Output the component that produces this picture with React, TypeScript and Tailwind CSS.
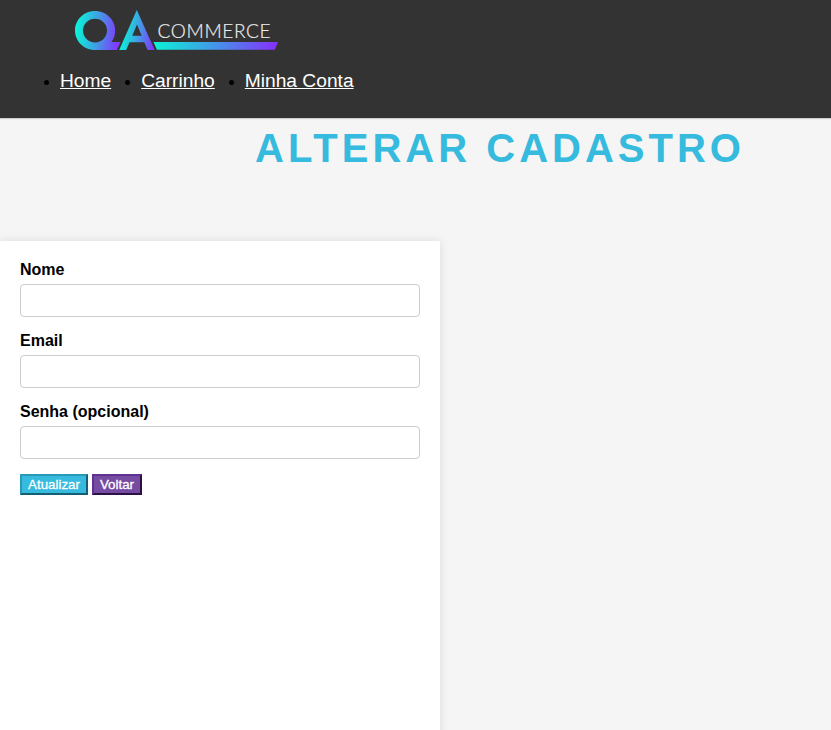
import React from "react";

function Logo() {
  return (
    <svg width="210" height="46" viewBox="72 7 210 46" className="block" aria-label="QA Commerce">
      <defs>
        <linearGradient id="q" gradientUnits="userSpaceOnUse" x1="76" y1="34" x2="117" y2="38">
          <stop offset="0" stopColor="#0cf2d8" />
          <stop offset="0.5" stopColor="#3f9fe4" />
          <stop offset="1" stopColor="#7f3bfb" />
        </linearGradient>
        <linearGradient id="a" gradientUnits="userSpaceOnUse" x1="121" y1="40" x2="153" y2="44">
          <stop offset="0" stopColor="#0cf2d8" />
          <stop offset="0.5" stopColor="#3f9fe4" />
          <stop offset="1" stopColor="#7f3bfb" />
        </linearGradient>
        <linearGradient id="bar" gradientUnits="userSpaceOnUse" x1="154" y1="0" x2="278" y2="0">
          <stop offset="0" stopColor="#0cf2d8" />
          <stop offset="0.5" stopColor="#4594e9" />
          <stop offset="1" stopColor="#862efb" />
        </linearGradient>
      </defs>
      <path
        fill="url(#q)"
        fillRule="evenodd"
        d="M95 11C84 11 75 19.700 75 30.500S84 50 95 50H117L120.500 42H111.500C113.800 38.800 115.200 34.800 115.200 30.500C115.200 19.700 106 11 95 11ZM95 18.800A12 11.800 0 1 1 95 42.400A12 11.800 0 1 1 95 18.800Z"
      />
      <path
        fill="url(#a)"
        fillRule="evenodd"
        d="M136.800 10L154.700 50H147.700L144.200 42.300H129.600L126.200 50H119.200ZM137 24.500L132.300 35.800H141.700Z"
      />
      <path fill="url(#bar)" d="M153.500 42H278L274.800 49.700H156.900Z" />
      <text
        x="157.600"
        y="38.300"
        textLength="113"
        lengthAdjust="spacing"
        fill="#ededed"
        stroke="#ededed"
        strokeWidth="0.2"
        className="font-['Lato',sans-serif] text-[19px] font-light"
      >
        COMMERCE
      </text>
    </svg>
  );
}

const links = ["Home", "Carrinho", "Minha Conta"];
const fields = [
  { label: "Nome", type: "text" },
  { label: "Email", type: "email" },
  { label: "Senha (opcional)", type: "password" },
];

export default function App() {
  return (
    <div className="h-[730px] overflow-hidden bg-[#f5f5f5] font-['Liberation_Sans',Arial,sans-serif] text-black">
      <header className="h-[118px] bg-[#333] pt-[7px] shadow-[0_1px_1px_rgba(0,0,0,0.15)]">
        <div className="pl-[72px]">
          <Logo />
        </div>
        <ul className="mt-[17px] flex list-disc gap-[30px] pl-[60px] text-base leading-[22px]">
          {links.map((link) => (
            <li key={link}>
              <a href="#" className="text-[19.2px] text-white underline">{link}</a>
            </li>
          ))}
        </ul>
      </header>
      <h1 className="mt-[7px] pl-[255px] text-[40px] leading-[46px] font-bold tracking-[4px] whitespace-nowrap text-[#36badd]">
        ALTERAR CADASTRO
      </h1>
      <form className="mt-[70px] h-[600px] w-[440px] bg-white p-5 shadow-[0_0_10px_rgba(0,0,0,0.1)]">
        {fields.map((field) => (
          <div key={field.label} className="mb-[15px]">
            <label className="mb-[5px] block text-base leading-[18px] font-bold">{field.label}</label>
            <input type={field.type} className="block h-[33px] w-full rounded border border-[#ccc] bg-white" />
          </div>
        ))}
        <div className="flex gap-1 text-[13.333px] leading-[17px] font-medium text-white">
          <button type="button" className="h-[21px] w-[68px] border-2 border-t-[#2899b7] border-r-[#165f73] border-b-[#165f73] border-l-[#2899b7] bg-[#36badd] [-webkit-text-stroke:0.3px_white]">
            Atualizar
          </button>
          <button type="button" className="h-[21px] w-[50px] border-2 border-t-[#5f3290] border-r-[#2d1144] border-b-[#2d1144] border-l-[#5f3290] bg-[#764ba2] [-webkit-text-stroke:0.3px_white]">
            Voltar
          </button>
        </div>
      </form>
    </div>
  );
}
